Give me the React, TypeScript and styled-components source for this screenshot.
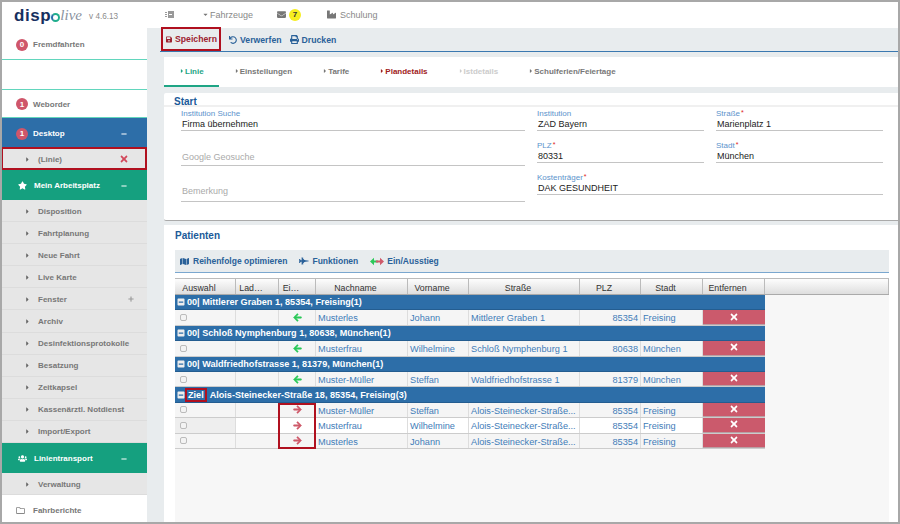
import React from "react";
import styled, { createGlobalStyle } from "styled-components";
import {
  FaArrowLeft, FaArrowRight, FaCaretDown, FaCaretRight, FaEnvelope, FaFighterJet, FaIndustry,
  FaMap, FaMinus, FaMinusSquare, FaPlus, FaPrint, FaRegFolder, FaSave, FaStar, FaTimes, FaUndo, FaUsers,
} from "react-icons/fa";

const Global = createGlobalStyle`
  html, body { margin: 0; padding: 0; background: #a8a8a8; }
  body { font-family: "Liberation Sans", Arial, sans-serif; }
  * { box-sizing: border-box; }
`;

const Frame = styled.div`
  width: 900px; height: 524px; border: 2px solid #a8a8a8; display: grid;
  grid-template-columns: 145px 1fr; overflow: hidden; background: #e8ecee;
`;
const Sidebar = styled.aside`display: flex; flex-direction: column; background: #fff; height: 520px; overflow: hidden;`;
const Logo = styled.div`height: 27px; display: flex; align-items: center; padding-left: 12px; white-space: nowrap; flex: none;`;
const LogoDisp = styled.span`font-size: 17px; font-weight: 700; color: #17305f; letter-spacing: .6px;`;
const LogoO = styled.span`
  display: inline-block; width: 9px; height: 9px; border: 2px solid #1fae8c; border-left-color: #2d6ea8;
  border-radius: 50%; margin-top: 3px;
`;
const LogoLive = styled.span`font-family: "Liberation Serif", serif; font-style: italic; font-size: 15px; color: #8a93a0;`;
const Version = styled.span`font-size: 8.2px; color: #8c8c8c; margin-left: 7px; margin-top: 2px;`;

const PlainRow = styled.div<{ $h: number; $line?: boolean }>`
  height: ${(p) => p.$h}px; display: flex; align-items: center; padding: 1px 0 0 14px; gap: 5px;
  font-size: 8px; font-weight: 700; color: #777; flex: none;
  border-bottom: ${(p) => (p.$line ? "1px solid #62d6bd" : "none")};
`;
const Badge = styled.span`
  width: 12px; height: 12px; border-radius: 50%; background: #cf566a; color: #fff; font-size: 8px; font-weight: 700;
  display: inline-flex; align-items: center; justify-content: center; flex: none;
`;
const HeadRow = styled.div<{ $bg: string; $h?: number }>`
  height: ${(p) => p.$h ?? 30}px; background: ${(p) => p.$bg}; color: #fff; font-size: 8px; font-weight: 700;
  display: flex; align-items: center; padding: 1px 20px 0 14px; gap: 5px; flex: none;
`;
const HeadIcon = styled.span`width: 12px; display: inline-flex; justify-content: center; font-size: 9px; margin-right: 1px;`;
const Grow = styled.span`flex: 1;`;
const SideItem = styled.div<{ $h?: number; $mark?: boolean }>`
  height: ${(p) => p.$h ?? 22.1}px; flex: none; background: #e6e6e6; display: flex; align-items: center;
  padding: 1px 12px 0 22px; color: #777; font-size: 8px; font-weight: 700;
  border-bottom: 1px solid #dcdcdc;
  ${(p) => p.$mark && "border: 2px solid #b0101f; margin: -1px 0 0 -1px; padding-left: 21px; height: 23px; width: 146px;"}
  svg.caret { font-size: 7px; margin-right: 7px; color: #666; }
`;
const Cross = styled.span`color: #d2475a; font-size: 10px; display: inline-flex; margin-right: 4px;`;
const Small = styled.span`color: #999; font-size: 6px; display: inline-flex; margin-right: 1px;`;

const Main = styled.main`display: flex; flex-direction: column; height: 520px; min-width: 0;`;
const TopNav = styled.nav`height: 26px; background: #fff; display: flex; align-items: center; padding: 0 0 1px 18px; color: #888; font-size: 9px; flex: none;`;
const NavItem = styled.span<{ $ml: number; $gap: number }>`
  display: inline-flex; align-items: center; gap: ${(p) => p.$gap}px; margin-left: ${(p) => p.$ml}px; svg { color: #777; }
`;
const Pill = styled.span`
  width: 12px; height: 12px; border-radius: 50%; background: #f7ee1f; color: #333; font-size: 8px; font-weight: 700;
  display: inline-flex; align-items: center; justify-content: center;
`;
const ActionBar = styled.div`
  height: 24px; margin-left: 13px; border-bottom: 1px solid #3a78b0; display: flex; align-items: center; flex: none; gap: 8px;
`;
const Action = styled.button<{ $red?: boolean }>`
  all: unset; display: inline-flex; align-items: center; gap: 3px; font-size: 8.7px; font-weight: 700; height: 24px;
  color: ${(p) => (p.$red ? "#9c2230" : "#2a6199")};
  ${(p) => p.$red && "border: 2px solid #b0101f; padding: 0 2px 0 3px; width: 60px; margin: -1px 0 0 1px; box-sizing: border-box;"}
`;
const Tabs = styled.div`height: 30px; margin: 5px 0 0 17px; background: #fff; display: flex; flex: none;`;
const Tab = styled.div<{ $color: string; $active?: boolean }>`
  display: flex; align-items: center; padding: 0 15px; height: 30px; font-size: 8px; font-weight: 700;
  color: ${(p) => p.$color}; border-bottom: 2px solid ${(p) => (p.$active ? "#1fa585" : "transparent")};
  svg { font-size: 6px; }
`;
const Card = styled.section`margin: 6px 0 0 17px; background: #fff; height: 128px; flex: none; border-bottom: 1px solid #aaa; border-radius: 2px 0 0 2px; `;
const CardTitle = styled.div`
  height: 14px; border-bottom: 2px solid #f0f0f0; padding-left: 10px; font-size: 10px; font-weight: 700; color: #1b5a99; line-height: 17px;
`;
const FormGrid = styled.div`display: grid; grid-template-columns: 344px 1fr; column-gap: 12px; padding: 2px 0 0 17px;`;
const LeftCol = styled.div`display: flex; flex-direction: column;`;
const RightGrid = styled.div`display: grid; grid-template-columns: 167px 167px; column-gap: 12px; grid-auto-rows: 32px;`;
const Field = styled.div<{ $h?: number; $span?: boolean }>`
  height: ${(p) => (p.$h ? `${p.$h}px` : "22px")}; border-bottom: 1.5px solid #c4c4c4; display: flex; flex-direction: column; justify-content: flex-end;
  ${(p) => p.$span && "grid-column: 1 / 3;"}
`;
const Label = styled.div`font-size: 8px; line-height: 10px; color: #5b93cc; em { color: #d22; font-style: normal; font-size: 7px; margin-left: 1px; position: relative; top: -1px; }`;
const Value = styled.div`font-size: 9px; line-height: 11px; color: #222; padding: 0 0 0 1px;`;
const Placeholder = styled.div<{ $pb: number }>`font-size: 9px; line-height: 11px; color: #aaa; padding: 0 0 ${(p) => p.$pb}px 1px;`;

const Patients = styled.section`margin: 4px 0 0 17px; background: #fff; flex: 1; display: flex; flex-direction: column; padding-left: 11px; min-height: 0;`;
const PatientTitle = styled.div`height: 25px; padding-top: 5px; font-size: 10px; font-weight: 700; color: #1b5a99;`;
const FnBar = styled.div`
  height: 23px; margin-right: 9px; background: #e8ecee; border-bottom: 1px solid #7aa7cf; display: flex; align-items: center; padding-left: 5px;
  font-size: 8.5px; font-weight: 700; color: #2a6199; flex: none;
`;
const Fn = styled.span<{ $ml?: number; $gap?: number }>`display: inline-flex; align-items: center; gap: ${(p) => p.$gap ?? 3}px; margin-left: ${(p) => p.$ml ?? 0}px;`;
const GridWrap = styled.div`margin: 5px 9px 0 0; flex: 1; background: #f7f7f7; border-top: 1px solid #bbb;`;
const COLS = "61px 43px 37px 92px 61px 111px 61px 62px 62px";
const HeaderRow = styled.div`
  display: grid; grid-template-columns: ${COLS} 1fr; height: 16px; background: linear-gradient(#fdfdfd, #dedede);
  border-bottom: 1px solid #aaa;
`;
const HeadCell = styled.div`
  font-size: 8.8px; color: #333; line-height: 18px; text-align: center; border-right: 1px solid #bbb; white-space: nowrap; overflow: hidden; padding-right: 12px;
`;
const Group = styled.div`
  width: 590px; height: 15.4px; background: #2d6ea8; color: #fff; font-size: 9.1px; font-weight: 700; display: flex; align-items: center;
  padding-left: 2px; white-space: nowrap; border-bottom: 1px solid #245d90;
  svg { font-size: 8px; margin-right: 2px; color: #eee; flex: none; }
`;
const Ziel = styled.span`outline: 2px solid #b0101f; outline-offset: 0; padding: 0 1px 0 1px; margin-right: 5px;`;
const Row = styled.div<{ $alt?: boolean }>`
  width: 590px; display: grid; grid-template-columns: ${COLS}; height: 15.4px; background: ${(p) => (p.$alt ? "#fff" : "#f5f5f5")};
  border-bottom: 1px solid #ccc;
`;
const Cell = styled.div<{ $right?: boolean; $shade?: boolean }>`
  font-size: 9.2px; line-height: 17px; color: #3f7cb8; padding: 0 2px; border-right: 1px solid #ddd; white-space: nowrap; overflow: hidden;
  text-overflow: ellipsis; text-align: ${(p) => (p.$right ? "right" : "left")}; ${(p) => p.$shade && "background: #eee;"}
`;
const BoxCell = styled(Cell)`display: flex; align-items: center; padding-left: 5px;`;
const Check = styled.span`width: 7px; height: 7px; border: 1px solid #bbb; border-radius: 2px; background: #f3f3f3;`;
const ArrowCell = styled(Cell)<{ $in?: boolean }>`
  display: flex; align-items: center; justify-content: center; font-size: 9px; color: ${(p) => (p.$in ? "#2cc95a" : "#cf5a6a")};
  svg { stroke: currentColor; stroke-width: 30px; }
`;
const Remove = styled.div`background: #cb5a6c; color: #fff; font-size: 10px; display: flex; align-items: center; justify-content: center; padding-bottom: 1px; border-bottom: 1px solid #b9a0a5;`;
const ZielRows = styled.div`position: relative; width: 590px;`;
const ArrowMark = styled.div`position: absolute; left: 103px; width: 38px; top: 0; bottom: 0; border: 2px solid #b0101f; pointer-events: none;`;

const items = ["Disposition", "Fahrtplanung", "Neue Fahrt", "Live Karte", "Fenster", "Archiv", "Desinfektionsprotokolle", "Besatzung", "Zeitkapsel", "Kassenärztl. Notdienst", "Import/Export"];
const heads = ["Auswahl", "Lad…", "Ei…", "Nachname", "Vorname", "Straße", "PLZ", "Stadt", "Entfernen", ""];

type P = { last: string; first: string; street: string; plz: string; city: string; };
const PatientRow = ({ p, inbound, alt }: { p: P; inbound?: boolean; alt?: boolean }) => (
  <Row $alt={alt}>
    <BoxCell $shade={alt}><Check /></BoxCell>
    <Cell />
    <ArrowCell $in={inbound}>{inbound ? <FaArrowLeft /> : <FaArrowRight />}</ArrowCell>
    <Cell>{p.last}</Cell>
    <Cell>{p.first}</Cell>
    <Cell>{p.street}</Cell>
    <Cell $right>{p.plz}</Cell>
    <Cell>{p.city}</Cell>
    <Remove><FaTimes /></Remove>
  </Row>
);

const ExchangeIcon = () => (
  <svg width="16" height="9" viewBox="0 0 16 9">
    <path d="M5 .8 1 4.5 5 8.2 5 5.6H9V3.4H5Z" fill="#2cc95a" />
    <path d="M11 .8 15 4.5 11 8.2V5.6H7V3.4H11Z" fill="#cf5a6a" />
  </svg>
);
const MenuIcon = () => (
  <svg width="9" height="7" viewBox="0 0 9 7" fill="#999">
    <rect x="3" y="0" width="6" height="7" /><rect x="0" y="1" width="2" height="1" /><rect x="0" y="3" width="2" height="1" /><rect x="0" y="5" width="2" height="1" />
    <rect x="4" y="3" width="3" height="1" fill="#fff" />
  </svg>
);

export default function App() {
  const alois = "Alois-Steinecker-Straße...";
  return (
    <>
      <Global />
      <Frame>
        <Sidebar>
          <Logo>
            <LogoDisp>disp</LogoDisp><LogoO /><LogoLive>live</LogoLive><Version>v 4.6.13</Version>
          </Logo>
          <PlainRow $h={31} $line><Badge>0</Badge>Fremdfahrten</PlainRow>
          <PlainRow $h={30} $line />
          <PlainRow $h={28} $line><Badge>1</Badge>Weborder</PlainRow>
          <HeadRow $bg="#2d6ea8"><Badge>1</Badge>Desktop<Grow /><FaMinus size={6} /></HeadRow>
          <SideItem $mark><FaCaretRight className="caret" />(Linie)<Grow /><Cross><FaTimes /></Cross></SideItem>
          <HeadRow $bg="#15a07f"><HeadIcon><FaStar /></HeadIcon>Mein Arbeitsplatz<Grow /><FaMinus size={6} /></HeadRow>
          {items.map((t) => (
            <SideItem key={t}>
              <FaCaretRight className="caret" />{t}
              {t === "Fenster" && <><Grow /><Small><FaPlus /></Small></>}
            </SideItem>
          ))}
          <HeadRow $bg="#15a07f"><HeadIcon><FaUsers /></HeadIcon>Linientransport<Grow /><FaMinus size={6} /></HeadRow>
          <SideItem><FaCaretRight className="caret" />Verwaltung</SideItem>
          <PlainRow $h={29}><FaRegFolder size={9} color="#888" style={{ marginRight: 3 }} />Fahrberichte</PlainRow>
        </Sidebar>
        <Main>
          <TopNav>
            <MenuIcon />
            <NavItem $ml={28} $gap={1}><FaCaretDown size={7} />Fahrzeuge</NavItem>
            <NavItem $ml={24} $gap={3}><FaEnvelope size={9} /><Pill>7</Pill></NavItem>
            <NavItem $ml={26} $gap={4}><FaIndustry size={9} />Schulung</NavItem>
          </TopNav>
          <ActionBar>
            <Action $red><FaSave size={9} />Speichern</Action>
            <Action><FaUndo size={8} />Verwerfen</Action>
            <Action><FaPrint size={9} />Drucken</Action>
          </ActionBar>
          <Tabs>
            <Tab $color="#1fa585" $active><FaCaretRight />Linie</Tab>
            <Tab $color="#777"><FaCaretRight />Einstellungen</Tab>
            <Tab $color="#777"><FaCaretRight />Tarife</Tab>
            <Tab $color="#a02020"><FaCaretRight />Plandetails</Tab>
            <Tab $color="#ccc"><FaCaretRight />Istdetails</Tab>
            <Tab $color="#777"><FaCaretRight />Schulferien/Feiertage</Tab>
          </Tabs>
          <Card>
            <CardTitle>Start</CardTitle>
            <FormGrid>
              <LeftCol>
                <Field>
                  <Label>Institution Suche</Label>
                  <Value>Firma übernehmen</Value>
                </Field>
                <Field $h={35}><Placeholder $pb={2}>Google Geosuche</Placeholder></Field>
                <Field $h={36}><Placeholder $pb={4}>Bemerkung</Placeholder></Field>
              </LeftCol>
              <RightGrid>
                <Field><Label>Institution</Label><Value>ZAD Bayern</Value></Field>
                <Field><Label>Straße<em>*</em></Label><Value>Marienplatz 1</Value></Field>
                <Field><Label>PLZ<em>*</em></Label><Value>80331</Value></Field>
                <Field><Label>Stadt<em>*</em></Label><Value>München</Value></Field>
                <Field $span><Label>Kostenträger<em>*</em></Label><Value>DAK GESUNDHEIT</Value></Field>
              </RightGrid>
            </FormGrid>
          </Card>
          <Patients>
            <PatientTitle>Patienten</PatientTitle>
            <FnBar>
              <Fn $gap={4}><FaMap size={9} />Reihenfolge optimieren</Fn>
              <Fn $ml={12}><FaFighterJet size={10} />Funktionen</Fn>
              <Fn $ml={11} $gap={2}><ExchangeIcon />Ein/Ausstieg</Fn>
            </FnBar>
            <GridWrap>
              <HeaderRow>
                {heads.map((h, i) => <HeadCell key={i}>{h}</HeadCell>)}
              </HeaderRow>
              <Group><FaMinusSquare />00| Mittlerer Graben 1, 85354, Freising(1)</Group>
              <PatientRow inbound p={{ last: "Musterles", first: "Johann", street: "Mittlerer Graben 1", plz: "85354", city: "Freising" }} />
              <Group><FaMinusSquare />00| Schloß Nymphenburg 1, 80638, München(1)</Group>
              <PatientRow inbound p={{ last: "Musterfrau", first: "Wilhelmine", street: "Schloß Nymphenburg 1", plz: "80638", city: "München" }} />
              <Group><FaMinusSquare />00| Waldfriedhofstrasse 1, 81379, München(1)</Group>
              <PatientRow inbound p={{ last: "Muster-Müller", first: "Steffan", street: "Waldfriedhofstrasse 1", plz: "81379", city: "München" }} />
              <Group><FaMinusSquare /><Ziel>Ziel</Ziel>Alois-Steinecker-Straße 18, 85354, Freising(3)</Group>
              <ZielRows>
                <PatientRow p={{ last: "Muster-Müller", first: "Steffan", street: alois, plz: "85354", city: "Freising" }} />
                <PatientRow alt p={{ last: "Musterfrau", first: "Wilhelmine", street: alois, plz: "85354", city: "Freising" }} />
                <PatientRow p={{ last: "Musterles", first: "Johann", street: alois, plz: "85354", city: "Freising" }} />
                <ArrowMark />
              </ZielRows>
            </GridWrap>
          </Patients>
        </Main>
      </Frame>
    </>
  );
}
